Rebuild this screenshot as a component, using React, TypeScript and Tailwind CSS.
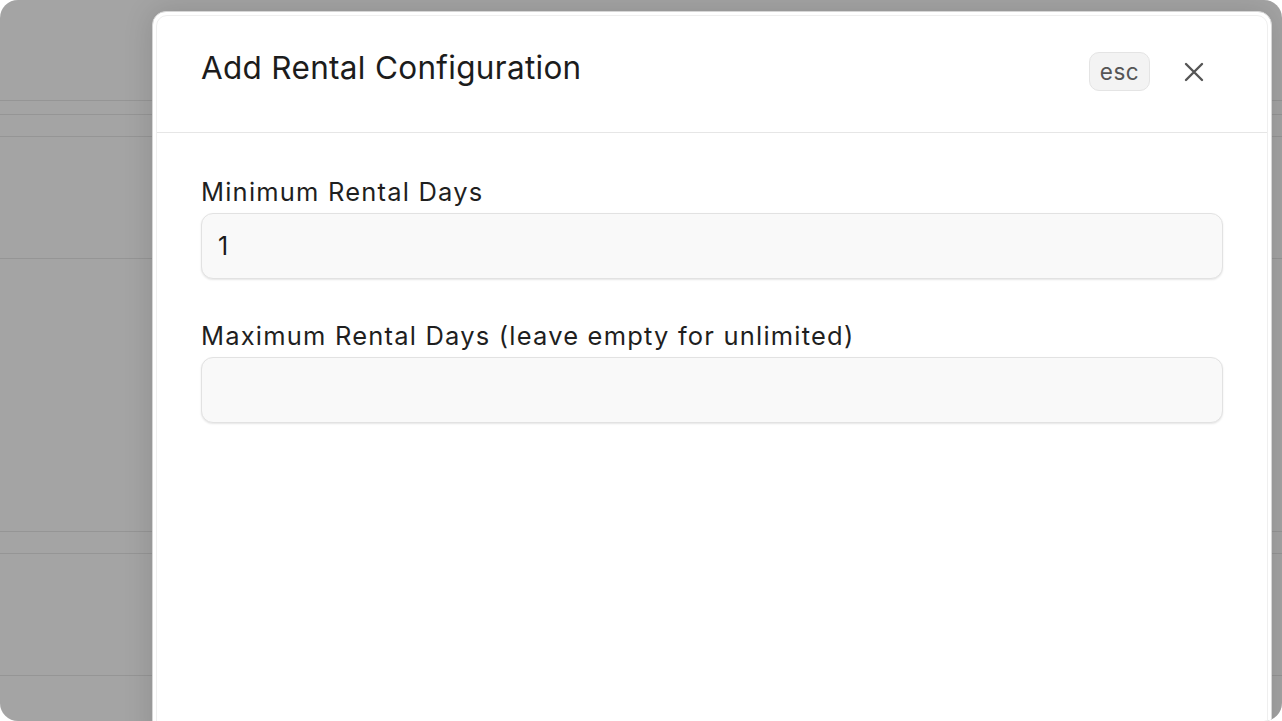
import React, { useState } from 'react';

const rowLines = [
  'h-[101px]',
  'h-[14px]',
  'h-[22px]',
  'h-[122px]',
  'h-[273px]',
  'h-[22px]',
  'h-[122px]',
];

const Field: React.FC<{ label: string; value: string; onChange: (v: string) => void; className?: string }> = ({
  label,
  value,
  onChange,
  className,
}) => (
  <div className={className}>
    <label className="block text-[25.5px] leading-[32px] tracking-[1.2px] text-[#1f1f1f]">{label}</label>
    <input
      type="text"
      value={value}
      onChange={e => onChange(e.target.value)}
      className="mt-[5px] block h-[66px] w-full rounded-[12px] border border-[#e2e2e2] bg-[#f9f9f9] px-[16px] text-[25px] tracking-[1px] text-[#1a1a1a] shadow-[0_1px_2px_rgba(0,0,0,0.1)] outline-none"
    />
  </div>
);

const App: React.FC = () => {
  const [minDays, setMinDays] = useState('1');
  const [maxDays, setMaxDays] = useState('');

  return (
    <div className="h-[721px] w-[1282px] overflow-hidden bg-white" style={{ fontFamily: 'Inter, "Noto Sans", sans-serif' }}>
      <div className="relative h-full overflow-hidden rounded-[18px] bg-[#a4a4a4]">
        {/* dimmed page behind the dialog */}
        <div className="flex flex-col">
          {rowLines.map((h, i) => (
            <div key={i} className={`${h} border-b border-[#959595]`} />
          ))}
        </div>

        {/* dialog */}
        <div className="absolute left-[152px] top-[11px] h-[740px] w-[1120px] rounded-t-[14px] border border-[#d6d6d6] bg-white p-[3px] shadow-[0_0_30px_rgba(0,0,0,0.14)]">
          <div className="h-full rounded-t-[11px] border border-[#efefef]">
            <div className="flex h-[117px] items-start justify-between border-b border-[#e6e6e6] px-[44px] pt-[33px]">
              <h2 className="text-[31.5px] leading-[38px] tracking-[0.3px] text-[#1c1c1c]">Add Rental Configuration</h2>
              <div className="mt-[3px] flex items-center gap-[15px]">
                <span className="flex h-[39px] w-[61px] items-center justify-center rounded-[10px] border border-[#e4e4e4] bg-[#f3f3f3] text-[22.5px] tracking-[0.5px] text-[#555555]">
                  esc
                </span>
                <button className="flex h-[39px] w-[58px] items-center justify-center text-[#555555]">
                  <svg width="20" height="20" viewBox="0 0 20 20" fill="none" stroke="currentColor" strokeWidth="2.4" strokeLinecap="round">
                    <path d="M2 2L18 18M18 2L2 18" />
                  </svg>
                </button>
              </div>
            </div>
            <div className="px-[44px] pt-[43px]">
              <Field label="Minimum Rental Days" value={minDays} onChange={setMinDays} />
              <Field
                label="Maximum Rental Days (leave empty for unlimited)"
                value={maxDays}
                onChange={setMaxDays}
                className="mt-[41px]"
              />
            </div>
          </div>
        </div>
      </div>
    </div>
  );
};

export default App;
